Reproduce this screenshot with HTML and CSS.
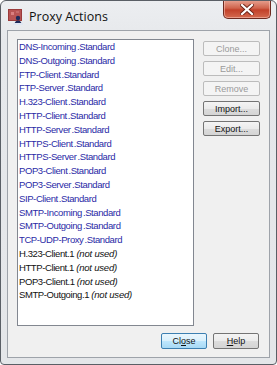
FILE: index.html
```html
<!DOCTYPE html>
<html lang="en">
<head>
    <meta charset="UTF-8">
    <title>Proxy Actions</title>
    <link rel="stylesheet" href="styles.css">
</head>
<body>
    <div class="window">
        <div class="titlebar">
            <svg class="app-icon" width="17" height="17" viewBox="0 0 17 17">
                <rect x="1" y="1" width="14" height="12" fill="#9a3b3b"/>
                <rect x="2" y="2" width="12" height="10" fill="#b85454"/>
                <rect x="4" y="4" width="3" height="3" fill="#d98080"/>
                <rect x="9" y="3" width="3" height="2" fill="#c76a6a"/>
                <circle cx="11" cy="10" r="2.2" fill="#1e2a5a"/>
                <path d="M7.5 16 Q8 12.5 11 12.5 Q14 12.5 14.5 16 Z" fill="#1e2a5a"/>
                <rect x="6" y="15" width="10" height="2" fill="#dfe6f2"/>
            </svg>
            <span class="title">Proxy Actions</span>
            <button class="close-x">
                <svg width="14" height="11" viewBox="0 0 14 11">
                    <path d="M2 1 L12 10 M12 1 L2 10" stroke="#6b2418" stroke-width="4" stroke-linecap="square"/>
                    <path d="M2 1 L12 10 M12 1 L2 10" stroke="#fff" stroke-width="2.2" stroke-linecap="square"/>
                </svg>
            </button>
        </div>
        <div class="frame">
            <div class="client">
                <div class="top-row">
                    <ul class="action-list">
                        <li><span class="name">DNS-Incoming</span>.Standard</li>
                        <li><span class="name">DNS-Outgoing</span>.Standard</li>
                        <li><span class="name">FTP-Client</span>.Standard</li>
                        <li><span class="name">FTP-Server</span>.Standard</li>
                        <li><span class="name">H.323-Client</span>.Standard</li>
                        <li><span class="name">HTTP-Client</span>.Standard</li>
                        <li><span class="name">HTTP-Server</span>.Standard</li>
                        <li><span class="name">HTTPS-Client</span>.Standard</li>
                        <li><span class="name">HTTPS-Server</span>.Standard</li>
                        <li><span class="name">POP3-Client</span>.Standard</li>
                        <li><span class="name">POP3-Server</span>.Standard</li>
                        <li><span class="name">SIP-Client</span>.Standard</li>
                        <li><span class="name">SMTP-Incoming</span>.Standard</li>
                        <li><span class="name">SMTP-Outgoing</span>.Standard</li>
                        <li><span class="name">TCP-UDP-Proxy</span>.Standard</li>
                        <li class="user">H.323-Client.1 <em>(not used)</em></li>
                        <li class="user">HTTP-Client.1 <em>(not used)</em></li>
                        <li class="user">POP3-Client.1 <em>(not used)</em></li>
                        <li class="user">SMTP-Outgoing.1 <em>(not used)</em></li>
                    </ul>
                    <div class="side-buttons">
                        <button class="btn" disabled>Clone...</button>
                        <button class="btn" disabled>Edit...</button>
                        <button class="btn" disabled>Remove</button>
                        <button class="btn">Import...</button>
                        <button class="btn">Export...</button>
                    </div>
                </div>
                <div class="bottom-row">
                    <button class="btn btn-wide btn-default">Cl<u>o</u>se</button>
                    <button class="btn btn-wide"><u>H</u>elp</button>
                </div>
            </div>
        </div>
    </div>
</body>
</html>
```

FILE: styles.css
```css
* { margin: 0; padding: 0; box-sizing: border-box; }
body {
    width: 277px;
    height: 365px;
    overflow: hidden;
    background: #fff;
    font-family: 'Liberation Sans', Arial, sans-serif;
}

/* window chrome */
.window {
    width: 277px;
    height: 365px;
    display: flex;
    flex-direction: column;
    border: 1px solid #5a5f66;
    border-radius: 6px 6px 4px 4px;
    background: linear-gradient(#eceef1, #e6e8eb 40px, #e4e6e9);
    overflow: hidden;
}
.titlebar {
    height: 29px;
    display: flex;
    align-items: center;
    padding-left: 6px;
    position: relative;
}
.app-icon { margin-top: 2px; }
.title {
    margin-left: 5px;
    margin-top: 1px;
    font-family: 'Open Sans', 'Noto Sans', sans-serif;
    font-size: 12.5px;
    color: #111;
}
.close-x {
    position: absolute;
    top: -1px;
    right: 5px;
    width: 48px;
    height: 19px;
    border: 1px solid #6d2a20;
    border-top: none;
    border-radius: 0 0 5px 5px;
    background: linear-gradient(#e8a493, #d0644d 45%, #c2412a 55%, #d46a4f);
    display: flex;
    align-items: center;
    justify-content: center;
    box-shadow: inset 0 0 0 1px rgba(255, 210, 200, 0.5);
}
.frame {
    flex: 1;
    padding: 0 6px 6px 6px;
    display: flex;
}
.client {
    flex: 1;
    background: #f0f0f0;
    border: 1px solid #9ea3aa;
    padding: 8px 9px 8px 9px;
    display: flex;
    flex-direction: column;
}

/* list + side buttons */
.top-row { display: flex; gap: 9px; }
.action-list {
    list-style: none;
    width: 177px;
    height: 287px;
    background: #fff;
    border: 1px solid #828790;
    padding: 0 1px;
    font-size: 9.5px;
    letter-spacing: -0.4px;
    line-height: 13.8px;
    color: #2a2aa6;
    white-space: nowrap;
}
.action-list .name { margin-right: 1px; }
.action-list .user { color: #111; }
.action-list em { letter-spacing: -0.2px; }
.side-buttons {
    display: flex;
    flex-direction: column;
    gap: 5px;
    padding-top: 2px;
}
.btn {
    width: 57px;
    height: 15px;
    font-family: 'Liberation Sans', Arial, sans-serif;
    font-size: 9px;
    color: #111;
    border: 1px solid #747474;
    border-radius: 2px;
    background: linear-gradient(#f4f4f4, #ebebeb 50%, #dcdcdc 52%, #d4d4d4);
}
.btn:disabled {
    color: #9a9a9a;
    border-color: #bcbcbc;
    background: #f4f4f4;
}
.bottom-row {
    margin-top: auto;
    display: flex;
    justify-content: flex-end;
    gap: 6px;
    padding-right: 1px;
}
.btn-wide { width: 46px; height: 16px; }
.btn-default {
    border-color: #3c7fb1;
    background: linear-gradient(#eaf6fd, #d9f0fc 50%, #bee6fd 52%, #a7d9f5);
}
```
